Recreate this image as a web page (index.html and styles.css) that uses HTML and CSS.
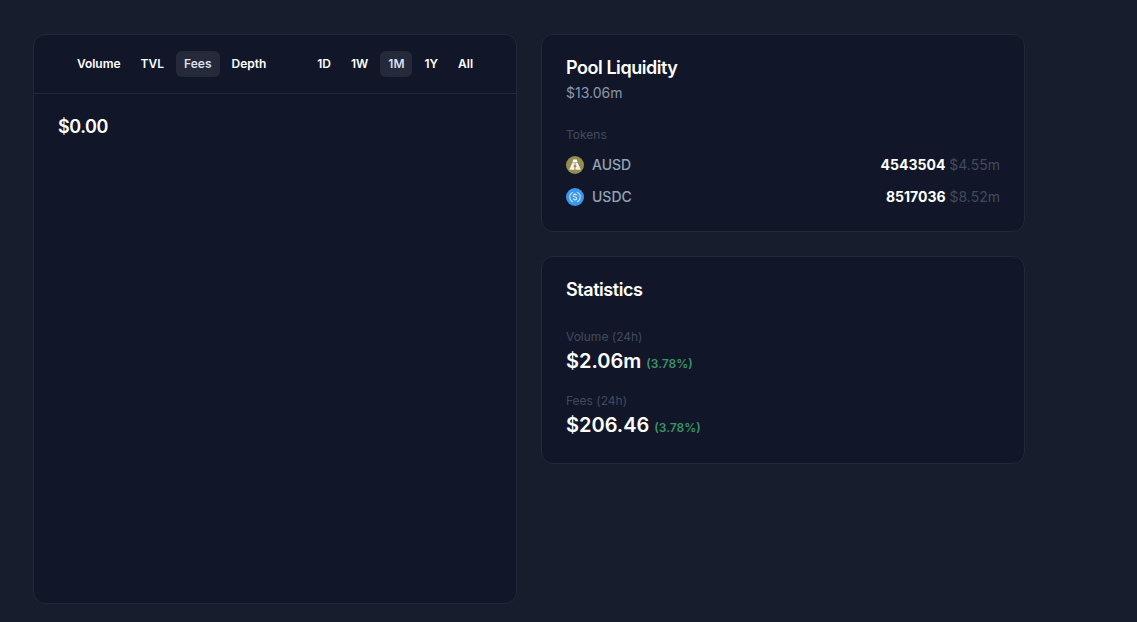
FILE: index.html
```html
<!DOCTYPE html>
<html lang="en">
<head>
  <meta charset="UTF-8" />
  <meta name="viewport" content="width=device-width, initial-scale=1" />
  <title>Pool</title>
  <link rel="stylesheet" href="styles.css">
</head>
<body>
  <main class="pool">
    <section class="card chart">
      <div class="chart-header">
        <div class="tabs">
          <button type="button" class="tab">Volume</button>
          <button type="button" class="tab">TVL</button>
          <button type="button" class="tab active">Fees</button>
          <button type="button" class="tab">Depth</button>
        </div>
        <div class="tabs">
          <button type="button" class="tab">1D</button>
          <button type="button" class="tab">1W</button>
          <button type="button" class="tab active">1M</button>
          <button type="button" class="tab">1Y</button>
          <button type="button" class="tab">All</button>
        </div>
      </div>
      <div class="chart-body">
        <div class="chart-value">$0.00</div>
      </div>
    </section>

    <div class="side">
      <section class="card panel">
        <h2>Pool Liquidity</h2>
        <p class="subtitle">$13.06m</p>
        <div class="label tokens-label">Tokens</div>
        <ul class="tokens">
          <li>
            <svg class="token-icon" viewBox="0 0 18 18" aria-hidden="true">
              <circle cx="9" cy="9" r="9" fill="#958c4f"/>
              <path d="M7.2 3.4h3.6l.7 3H6.5z" fill="#fff"/>
              <path d="M6.2 7h2.3v2.1l-1.2 1.2 1.2 1.1v2.4H3.2z" fill="#f4f2e6"/>
              <path d="M11.8 7H9.5v2.1l1.2 1.2-1.2 1.1v2.4h5.3z" fill="#f4f2e6"/>
            </svg>
            <span class="token-name">AUSD</span>
            <span class="token-amount"><strong>4543504</strong> $4.55m</span>
          </li>
          <li>
            <svg class="token-icon" viewBox="0 0 18 18" fill="none" aria-hidden="true">
              <circle cx="9" cy="9" r="9" fill="#3b97ee"/>
              <path d="M7 4.2a5.2 5.2 0 0 0 0 9.6M11 4.2a5.2 5.2 0 0 1 0 9.6" stroke="#c4e1fa" stroke-width="1.1"/>
              <path d="M10.7 7.5c-.1-.8-.8-1.2-1.7-1.2s-1.7.5-1.7 1.3C7.3 9.4 10.8 8.6 10.8 10.4c0 .8-.8 1.3-1.8 1.3s-1.7-.5-1.8-1.3M9 5.3v1M9 11.7v1" stroke="#c4e1fa" stroke-width="1.2"/>
            </svg>
            <span class="token-name">USDC</span>
            <span class="token-amount"><strong>8517036</strong> $8.52m</span>
          </li>
        </ul>
      </section>

      <section class="card panel">
        <h2>Statistics</h2>
        <div class="stat">
          <div class="label">Volume (24h)</div>
          <div class="stat-value">$2.06m <span class="change">(3.78%)</span></div>
        </div>
        <div class="stat">
          <div class="label">Fees (24h)</div>
          <div class="stat-value">$206.46 <span class="change">(3.78%)</span></div>
        </div>
      </section>
    </div>
  </main>
</body>
</html>
```
FILE: styles.css
```css
* {
  box-sizing: border-box;
}
body {
  margin: 0;
  background-color: #181d2e;
  color: #fff;
  font-family: Inter, sans-serif;
  font-size: 14px;
  line-height: 20px;
}
h2, p, ul {
  margin: 0;
  padding: 0;
}
.pool {
  display: grid;
  grid-template-columns: 1fr 1fr;
  gap: 24px;
  min-height: 100vh;
  padding: 34px 112px 18px 33px;
}
.card {
  background-color: #111728;
  border: 1px solid #222839;
  border-radius: 12px;
}
.chart-header {
  display: flex;
  justify-content: space-evenly;
  padding: 16px 0;
  border-bottom: 1px solid #222839;
}
.tabs {
  display: flex;
  gap: 4px;
}
.tab {
  padding: 3px 8px;
  border: none;
  border-radius: 6px;
  background: none;
  color: #fff;
  font-family: inherit;
  font-size: 12px;
  font-weight: 600;
  line-height: 20px;
  cursor: pointer;
}
.tab.active {
  background-color: #242a3a;
  color: #dcdff0;
}
.chart-body {
  padding: 20px 24px;
}
h2,
.chart-value {
  font-size: 18px;
  font-weight: 600;
  letter-spacing: -0.025em;
  line-height: 26px;
}
.side {
  display: flex;
  flex-direction: column;
  gap: 24px;
}
.panel {
  padding: 20px 24px 24px;
}
.subtitle {
  color: #8a97ad;
  line-height: 24px;
}
.label {
  color: #414a5d;
  font-size: 12px;
  line-height: 20px;
}
.tokens-label {
  margin-top: 20px;
}
.tokens {
  display: flex;
  flex-direction: column;
  gap: 12px;
  margin-top: 10px;
  list-style: none;
}
.tokens li {
  display: flex;
  align-items: center;
  gap: 8px;
}
.token-icon {
  width: 18px;
  height: 18px;
}
.token-name {
  color: #94a3b8;
  font-weight: 500;
}
.token-amount {
  margin-left: auto;
  color: #414a5d;
}
.token-amount strong {
  color: #fff;
  font-weight: 700;
}
.stat {
  margin-top: 16px;
}
h2 + .stat {
  margin-top: 24px;
}
.stat-value {
  font-size: 20px;
  font-weight: 600;
  line-height: 28px;
}
.change {
  color: #3c9469;
  font-size: 12px;
  font-weight: 600;
  line-height: 20px;
}
```
